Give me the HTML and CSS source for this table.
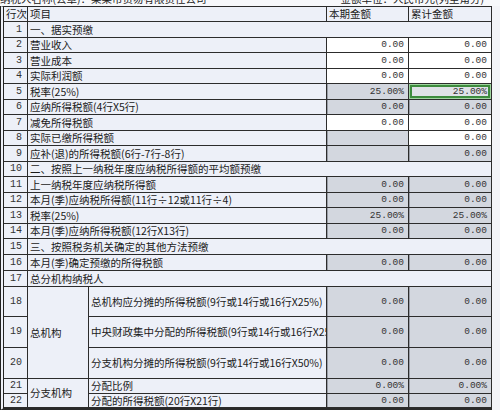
FILE: index.html
```html
<!DOCTYPE html>
<html lang="zh-CN">
<head>
<meta charset="utf-8">
<link rel="stylesheet" href="styles.css">
</head>
<body>
<div class="page">
  <div class="caption">
    <div class="caption-inner">
      <span>纳税人名称(公章)：某某市贸易有限责任公司</span>
      <span>金额单位：人民币元(列至角分)</span>
    </div>
  </div>
  <div class="sheet">
    <div class="c hd">行次</div><div class="c hd span2">项目</div><div class="c hd">本期金额</div><div class="c hd">累计金额</div>

    <div class="c no">1</div><div class="c sec span4">一、据实预缴</div>
    <div class="c no">2</div><div class="c item span2">营业收入</div><div class="c val w">0.00</div><div class="c val w">0.00</div>
    <div class="c no">3</div><div class="c item span2">营业成本</div><div class="c val w">0.00</div><div class="c val w">0.00</div>
    <div class="c no">4</div><div class="c item span2">实际利润额</div><div class="c val w">0.00</div><div class="c val w">0.00</div>
    <div class="c no">5</div><div class="c item span2">税率(25%)</div><div class="c val g">25.00%</div><div class="c val focus">25.00%</div>
    <div class="c no">6</div><div class="c item span2">应纳所得税额(4行X5行)</div><div class="c val g">0.00</div><div class="c val g">0.00</div>
    <div class="c no">7</div><div class="c item span2">减免所得税额</div><div class="c val w">0.00</div><div class="c val w">0.00</div>
    <div class="c no">8</div><div class="c item span2">实际已缴所得税额</div><div class="c val g"></div><div class="c val w">0.00</div>
    <div class="c no">9</div><div class="c item span2">应补(退)的所得税额(6行-7行-8行)</div><div class="c val g"></div><div class="c val g">0.00</div>

    <div class="c no">10</div><div class="c sec span4">二、按照上一纳税年度应纳税所得额的平均额预缴</div>
    <div class="c no">11</div><div class="c item span2">上一纳税年度应纳税所得额</div><div class="c val g">0.00</div><div class="c val g">0.00</div>
    <div class="c no">12</div><div class="c item span2">本月(季)应纳税所得额(11行÷12或11行÷4)</div><div class="c val g">0.00</div><div class="c val g">0.00</div>
    <div class="c no">13</div><div class="c item span2">税率(25%)</div><div class="c val g">25.00%</div><div class="c val g">25.00%</div>
    <div class="c no">14</div><div class="c item span2">本月(季)应纳所得税额(12行X13行)</div><div class="c val g">0.00</div><div class="c val g">0.00</div>

    <div class="c no">15</div><div class="c sec span4">三、按照税务机关确定的其他方法预缴</div>
    <div class="c no">16</div><div class="c item span2">本月(季)确定预缴的所得税额</div><div class="c val g">0.00</div><div class="c val g">0.00</div>

    <div class="c no">17</div><div class="c sec span4">总分机构纳税人</div>
    <div class="c no">18</div><div class="c grp rows3">总机构</div><div class="c item">总机构应分摊的所得税额(9行或14行或16行X25%)</div><div class="c val g">0.00</div><div class="c val g">0.00</div>
    <div class="c no">19</div><div class="c item">中央财政集中分配的所得税额(9行或14行或16行X25%)</div><div class="c val g">0.00</div><div class="c val g">0.00</div>
    <div class="c no">20</div><div class="c item">分支机构分摊的所得税额(9行或14行或16行X50%)</div><div class="c val g">0.00</div><div class="c val g">0.00</div>
    <div class="c no">21</div><div class="c grp rows2">分支机构</div><div class="c item">分配比例</div><div class="c val g">0.00%</div><div class="c val g">0.00%</div>
    <div class="c no">22</div><div class="c item">分配的所得税额(20行X21行)</div><div class="c val g">0.00</div><div class="c val g">0.00</div>
  </div>
</div>
</body>
</html>
```

FILE: styles.css
```css
html, body {
  margin: 0;
  padding: 0;
  background: #f3f4f8;
}

.page {
  width: 500px;
  height: 410px;
  overflow: hidden;
  font-family: "Noto Sans CJK SC", sans-serif;
  color: #1a1a1a;
}

.caption {
  height: 6px;
  overflow: hidden;
  background: #f7f8fb;
}

.caption-inner {
  display: flex;
  justify-content: space-between;
  width: 484px;
  margin-top: -8px;
  font-size: 10.5px;
  line-height: 13px;
  color: #222;
}

.sheet {
  display: grid;
  width: max-content;
  grid-template-columns: 24px 61px 238px 82px 83px;
  grid-template-rows:
    15px 16px 15px 16px 15px 16px 15px 16px 15px 16px 15px 16px
    15px 16px 15px 16px 16px 16px 30px 31px 31px 15px 14px;
  border-top: 1px solid #2a2a2a;
  border-left: 4px double #222;
  border-bottom: 2px solid #2a2a2a;
  background: #edf0f8;
}

.c {
  box-sizing: border-box;
  border-right: 1px solid #2c2c2c;
  border-bottom: 1px solid #2c2c2c;
  overflow: hidden;
  white-space: nowrap;
  display: flex;
  align-items: center;
  font-size: 10.5px;
  line-height: 12px;
  background: #edf0f8;
}

.span2 { grid-column: span 2; }
.span4 { grid-column: span 4; }
.rows3 { grid-row: span 3; }
.rows2 { grid-row: span 2; }

.hd {
  padding-left: 2px;
}

.no {
  justify-content: flex-end;
  padding-right: 5px;
  font-family: "Liberation Mono", monospace;
  font-size: 10px;
  color: #333;
}

.sec, .item, .grp {
  padding-left: 2px;
}

.val {
  justify-content: flex-end;
  padding-right: 4px;
  font-family: "Liberation Mono", monospace;
  font-size: 9.5px;
  color: #333;
}

.w {
  background: #ffffff;
}

.g {
  background: #d3d7df;
  box-shadow: inset 1px 0 0 #9a9ea7;
}

.focus {
  background: #dfe2e7;
  box-shadow: inset 0 0 0 1px #9fd59f, inset 0 0 0 3px #3d8c3d;
}
```
